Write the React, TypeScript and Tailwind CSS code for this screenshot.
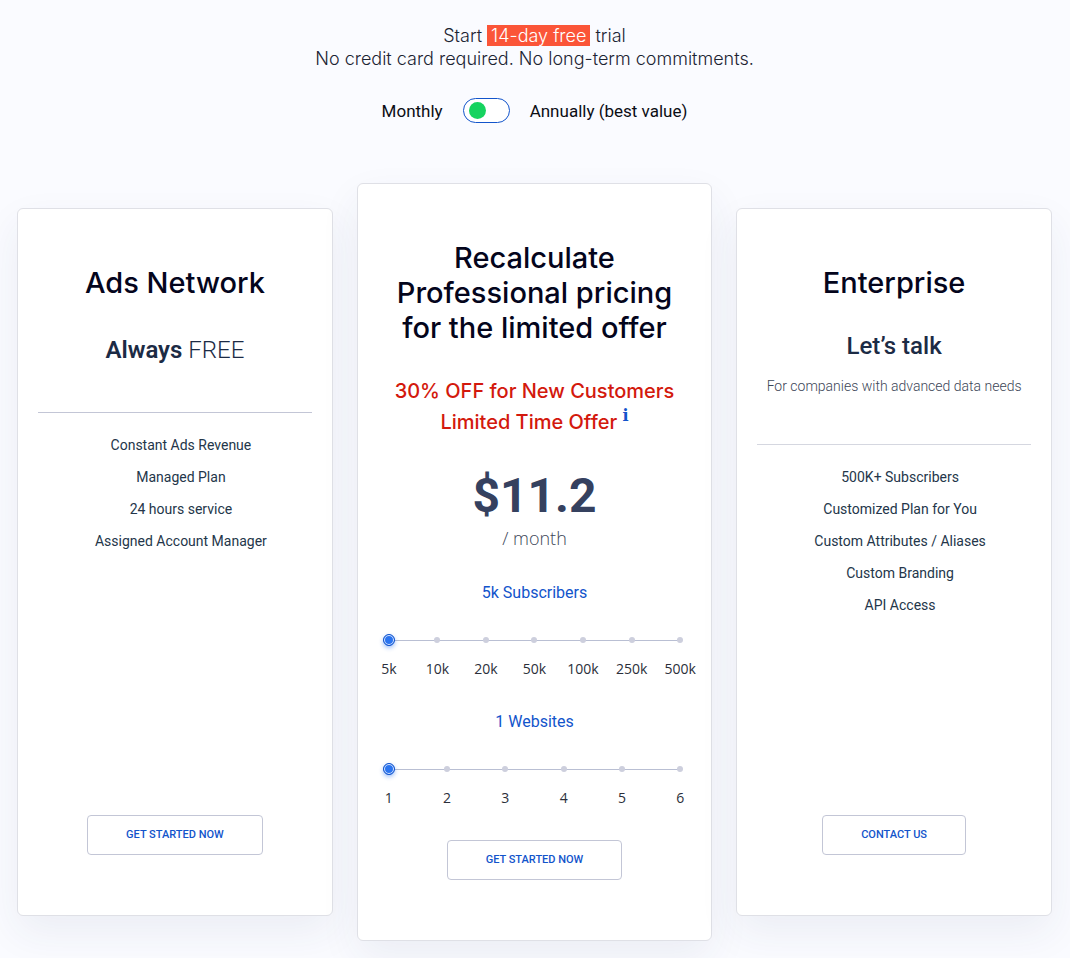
import { useState } from 'react';

const subscriberSteps = ['5k', '10k', '20k', '50k', '100k', '250k', '500k'];
const websiteSteps = ['1', '2', '3', '4', '5', '6'];

const adsFeatures = [
  'Constant Ads Revenue',
  'Managed Plan',
  '24 hours service',
  'Assigned Account Manager',
];

const enterpriseFeatures = [
  '500K+ Subscribers',
  'Customized Plan for You',
  'Custom Attributes / Aliases',
  'Custom Branding',
  'API Access',
];

const cardClass =
  'flex flex-col items-center rounded-md border border-[#dfe0e6] bg-white px-5 pt-14 pb-[60px] text-center shadow-[0_16px_40px_rgba(40,50,100,0.07)]';

function PlanTitle({ children }: { children: React.ReactNode }) {
  return (
    <h2 className="font-['Inter',sans-serif] text-[29px] leading-[35px] font-medium text-[#04051c]">
      {children}
    </h2>
  );
}

function PlanButton({ children }: { children: React.ReactNode }) {
  return (
    <button
      type="button"
      className="h-10 cursor-pointer rounded border border-[#c3c6d6] bg-white px-[38px] text-[11px] font-medium text-[#1254cb] hover:border-[#1254cb]"
    >
      {children}
    </button>
  );
}

function Features({ items }: { items: string[] }) {
  return (
    <ul className="mt-4 mb-8 w-full pl-3 text-sm leading-8 text-[#24364a]">
      {items.map((item) => (
        <li key={item}>{item}</li>
      ))}
    </ul>
  );
}

type StepSliderProps = {
  id: string;
  unit: string;
  steps: string[];
  value: number;
  onChange: (value: number) => void;
};

function StepSlider({ id, unit, steps, value, onChange }: StepSliderProps) {
  return (
    <div className="w-full">
      <label htmlFor={id} className="block text-base leading-6 text-[#1254cb]">
        {steps[value]} {unit}
      </label>
      <div className="relative mt-[29px] h-3">
        <div className="absolute inset-x-1 top-0 flex h-3 items-center">
          <div className="h-px w-full bg-[#b9bfd3]" />
        </div>
        <div className="absolute inset-x-[3px] top-0 flex h-3 items-center justify-between">
          {steps.map((step) => (
            <span key={step} className="h-1.5 w-1.5 rounded-full bg-[#cdcfdd]" />
          ))}
        </div>
        <input
          id={id}
          type="range"
          min={0}
          max={steps.length - 1}
          value={value}
          onChange={(e) => onChange(Number(e.target.value))}
          className="absolute inset-0 m-0 h-3 w-full cursor-pointer appearance-none bg-transparent [&::-webkit-slider-thumb]:h-3 [&::-webkit-slider-thumb]:w-3 [&::-webkit-slider-thumb]:appearance-none [&::-webkit-slider-thumb]:rounded-full [&::-webkit-slider-thumb]:border [&::-webkit-slider-thumb]:border-[#1254cb] [&::-webkit-slider-thumb]:bg-[#2a74f0] [&::-webkit-slider-thumb]:shadow-[inset_0_0_0_1px_#e3edff,0_2px_4px_rgba(42,116,240,0.45)]"
        />
      </div>
      <div className="mt-[13px] flex justify-between px-1.5 font-['Open_Sans',sans-serif] text-sm leading-5 text-[#2b2f3a]">
        {steps.map((step) => (
          <span key={step} className="flex w-0 justify-center">
            {step}
          </span>
        ))}
      </div>
    </div>
  );
}

export default function App() {
  const [annual, setAnnual] = useState(false);
  const [subscribers, setSubscribers] = useState(0);
  const [websites, setWebsites] = useState(0);

  return (
    <main className="min-h-screen bg-[#fafbff] pt-6 pr-[18px] pl-[17px] font-['Roboto',sans-serif]">
      <p className="text-center font-['Inter',sans-serif] text-[18px] leading-[23px] font-light text-[#1c2433]">
        Start <mark className="bg-[#fb5538] px-1 text-white">14-day free</mark> trial
        <br />
        No credit card required. No long-term commitments.
      </p>

      <div className="mt-7 flex items-center justify-center gap-5 text-[17px] leading-6 text-[#0b0d14]">
        <span>Monthly</span>
        <input
          type="checkbox"
          role="switch"
          aria-label="Annual billing"
          checked={annual}
          onChange={(e) => setAnnual(e.target.checked)}
          className="flex h-[25px] w-[47px] cursor-pointer appearance-none items-center rounded-full border border-[#1254cb] bg-white px-[5px] before:h-[17px] before:w-[17px] before:rounded-full before:bg-[#16d35f] checked:justify-end"
        />
        <span>Annually (best value)</span>
      </div>

      <div className="mt-[60px] grid gap-6 pb-4 md:grid-cols-[8fr_9fr_8fr]">
        <section className={`${cardClass} md:my-[25px]`}>
          <PlanTitle>Ads Network</PlanTitle>
          <p className="mt-[34px] text-2xl leading-8 text-[#1c2b45]">
            <b className="font-semibold">Always</b> <span className="font-light">FREE</span>
          </p>
          <hr className="mt-[46px] w-full border-[#c3c6d6]" />
          <Features items={adsFeatures} />
          <div className="mt-auto">
            <PlanButton>GET STARTED NOW</PlanButton>
          </div>
        </section>

        <section className={cardClass}>
          <PlanTitle>
            Recalculate
            <br />
            Professional pricing
            <br />
            for the limited offer
          </PlanTitle>
          <p className="mt-[31px] font-['Inter',sans-serif] text-xl leading-[31px] font-medium text-[#d3190d]">
            30% OFF for New Customers
            <br />
            Limited Time Offer{' '}
            <sup className="font-['DejaVu_Serif',serif] text-base leading-none font-bold text-[#1254cb]">i</sup>
          </p>
          <p className="mt-[34px] text-5xl leading-[48px] font-bold text-[#35415f]">$11.2</p>
          <p className="mt-1.5 font-['Open_Sans',sans-serif] text-lg leading-6 font-light text-[#3c4657]">
            / month
          </p>
          <div className="mt-[31px] flex w-full flex-col gap-[31px] px-[5px]">
            <StepSlider
              id="subscribers"
              unit="Subscribers"
              steps={subscriberSteps}
              value={subscribers}
              onChange={setSubscribers}
            />
            <StepSlider
              id="websites"
              unit="Websites"
              steps={websiteSteps}
              value={websites}
              onChange={setWebsites}
            />
          </div>
          <div className="mt-8">
            <PlanButton>GET STARTED NOW</PlanButton>
          </div>
        </section>

        <section className={`${cardClass} md:my-[25px]`}>
          <PlanTitle>Enterprise</PlanTitle>
          <p className="mt-[30px] text-2xl leading-8 font-medium text-[#1c2b45]">Let’s talk</p>
          <p className="mt-3 text-sm leading-6 font-light text-[#3c4657]">
            For companies with advanced data needs
          </p>
          <hr className="mt-[46px] w-full border-[#d5d7e0]" />
          <Features items={enterpriseFeatures} />
          <div className="mt-auto">
            <PlanButton>CONTACT US</PlanButton>
          </div>
        </section>
      </div>
    </main>
  );
}
